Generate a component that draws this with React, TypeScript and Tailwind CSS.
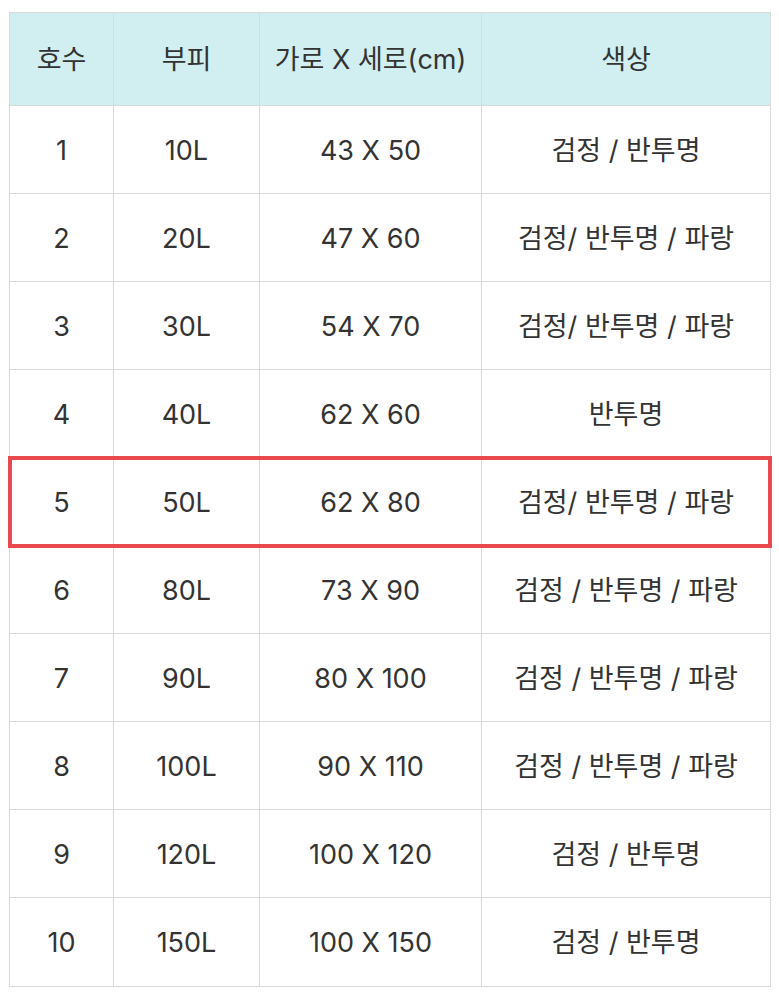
const rows = [
  { no: "1", vol: "10L", size: "43 X 50", color: "검정 / 반투명" },
  { no: "2", vol: "20L", size: "47 X 60", color: "검정/ 반투명 / 파랑" },
  { no: "3", vol: "30L", size: "54 X 70", color: "검정/ 반투명 / 파랑" },
  { no: "4", vol: "40L", size: "62 X 60", color: "반투명" },
  { no: "5", vol: "50L", size: "62 X 80", color: "검정/ 반투명 / 파랑", highlight: true },
  { no: "6", vol: "80L", size: "73 X 90", color: "검정 / 반투명 / 파랑" },
  { no: "7", vol: "90L", size: "80 X 100", color: "검정 / 반투명 / 파랑" },
  { no: "8", vol: "100L", size: "90 X 110", color: "검정 / 반투명 / 파랑" },
  { no: "9", vol: "120L", size: "100 X 120", color: "검정 / 반투명" },
  { no: "10", vol: "150L", size: "100 X 150", color: "검정 / 반투명" },
];

const cols = "grid grid-cols-[104px_146px_222px_1fr]";
const cell = "flex items-center justify-center pt-[3px] border-r border-[#dadada] last:border-r-0";

export default function App() {
  return (
    <div className="bg-white w-[779px] h-[997px] pt-[12px] pl-[9px] pr-[8px]"
      style={{ fontFamily: "Inter, 'Noto Sans CJK KR', sans-serif" }}>
      <div className="border border-[#dadada] text-[#333333] text-[27px]">
        <div className={`${cols} h-[93px] bg-[#d1eef0] border-b border-[#dadada]`}>
          <div className={cell}>호수</div>
          <div className={cell}>부피</div>
          <div className={cell}>가로 X 세로(cm)</div>
          <div className={cell}>색상</div>
        </div>
        {rows.map((r, i) => (
          <div key={r.no}
            className={`${cols} h-[88px] ${i < rows.length - 1 ? "border-b border-[#dadada]" : ""} ${r.highlight ? "relative outline-4 outline-[#e8494d] -outline-offset-2 z-10" : ""}`}>
            <div className={cell}>{r.no}</div>
            <div className={cell}>{r.vol}</div>
            <div className={cell}>{r.size}</div>
            <div className={cell}>{r.color}</div>
          </div>
        ))}
      </div>
    </div>
  );
}
